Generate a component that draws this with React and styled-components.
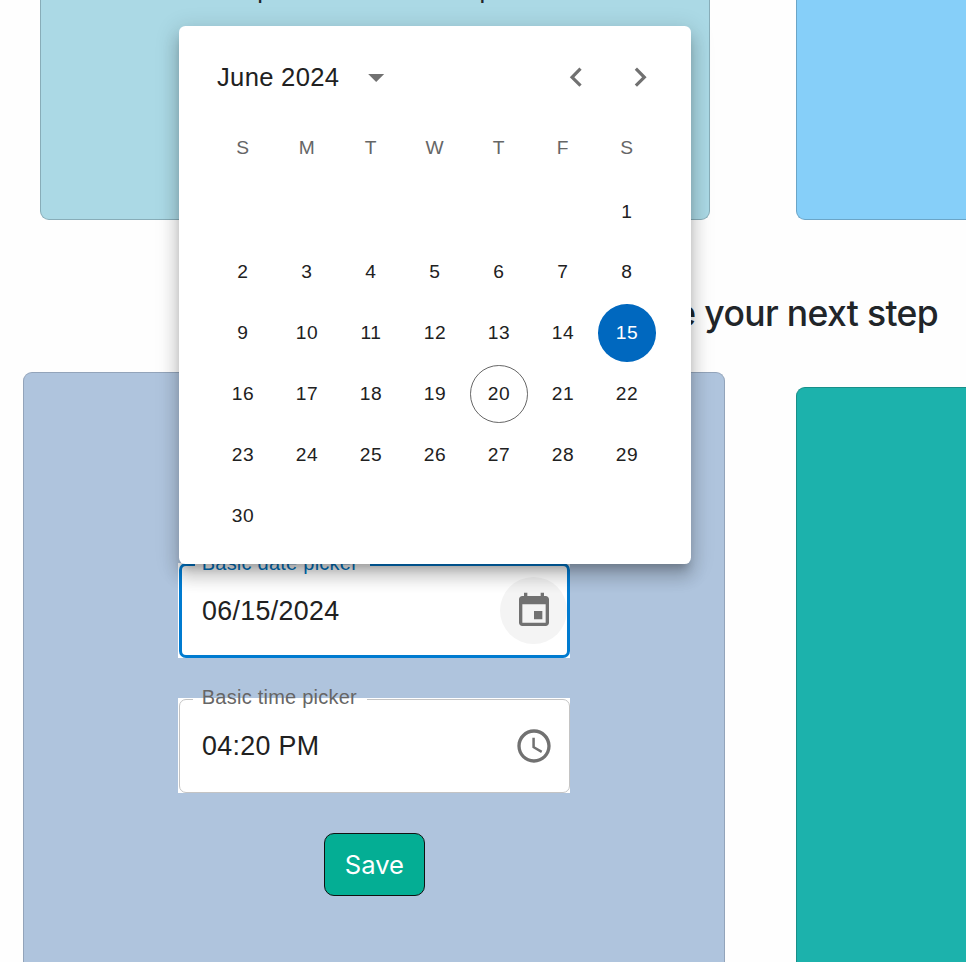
import React from "react";
import styled, { createGlobalStyle, css } from "styled-components";

const GlobalStyle = createGlobalStyle`
  *, *::before, *::after { box-sizing: border-box; }
  body {
    margin: 0;
    overflow: hidden;
    background: #fefefe;
    color: #212529;
    font-family: Inter, "Liberation Sans", sans-serif;
  }
`;

const Page = styled.main`
  position: relative;
  height: 962px;
  overflow: hidden;
`;

const CardRow = styled.section`
  display: grid;
  grid-template-columns: 796px 1fr;
  height: ${(p) => p.$height}px;
`;

const Card = styled.article`
  display: flex;
  flex-direction: column;
  background: ${(p) => p.$color};
  border: 1px solid ${(p) => p.$border};
  ${(p) =>
    p.$edge === "top"
      ? css`border-bottom: 0; border-radius: 9px 9px 0 0;`
      : css`border-top: 0; border-radius: 0 0 9px 9px;`}
  margin: ${(p) => p.$margin || "0"};
  ${(p) => p.$bleed && css`border-right: 0; border-top-right-radius: 0; border-bottom-right-radius: 0;`}
`;

const CardCaption = styled.p`
  display: flex;
  gap: 206.6px;
  margin: -26px 0 0 216px;
  font-size: 25.6px;
  line-height: 30px;
`;

const StepTitle = styled.h2`
  display: flex;
  justify-content: flex-end;
  align-items: center;
  height: 152px;
  margin: 0;
  padding: 36px 28px 0 0;
  font-size: 35.5px;
  font-weight: 500;
  line-height: 42px;
  letter-spacing: -0.65px;
  white-space: nowrap;
`;

const Form = styled.form`
  display: flex;
  flex-direction: column;
  align-items: center;
  width: 392px;
  margin: 190px 0 0 154px;
`;

const Field = styled.div`
  position: relative;
  display: flex;
  align-items: center;
  justify-content: space-between;
  width: 392px;
  height: 95px;
  margin-bottom: 40px;
  padding: 0 3.4px 0 23.5px;
  background: #fff;
`;

const Outline = styled.fieldset`
  position: absolute;
  inset: ${(p) => (p.$focused ? "-12px" : "-13px")} 0.5px 0.5px 0.5px;
  margin: 0;
  padding: 0 0 0 ${(p) => (p.$focused ? 12.8 : 13.4)}px;
  border: ${(p) => (p.$focused ? "3px solid #007bd0" : "1px solid #c4c4c4")};
  border-radius: 7px;
  color: ${(p) => (p.$focused ? "#0074c2" : "#666")};
  pointer-events: none;
`;

const Legend = styled.legend`
  padding: 0 ${(p) => (p.$focused ? 12 : 10)}px ${(p) => (p.$focused ? 2 : 3)}px ${(p) => (p.$focused ? 7 : 8.5)}px;
  font: 20px/25px "Liberation Sans", Arial, sans-serif;
  letter-spacing: 0.24px;
`;

const Value = styled.span`
  color: #212121;
  font: 26.8px/36px "Liberation Sans", Arial, sans-serif;
  letter-spacing: 0.34px;
`;

const IconButton = styled.button`
  display: grid;
  place-items: center;
  width: ${(p) => p.$size}px;
  height: ${(p) => p.$size}px;
  padding: 0;
  border: 0;
  border-radius: 50%;
  background: ${(p) => (p.$hovered ? "#f4f4f4" : "transparent")};
  color: #717171;
`;

const Glyph = styled.svg`
  display: block;
  width: ${(p) => p.$size || 38.4}px;
  height: ${(p) => p.$size || 38.4}px;
  fill: currentColor;
`;

const SaveButton = styled.button`
  width: 101px;
  height: 63px;
  padding: 0;
  border: 1px solid #111;
  border-radius: 10px;
  background: #04ae94;
  color: #fff;
  font: 400 25.6px/38px Inter, "Liberation Sans", sans-serif;
`;

const Calendar = styled.div`
  position: absolute;
  top: 26px;
  left: 179px;
  width: 512px;
  height: 538px;
  padding: 19px 32px 0;
  border-radius: 6.4px;
  background: #fff;
  color: #212121;
  font-family: "Liberation Sans", Arial, sans-serif;
  box-shadow:
    0 8px 8px -4.8px rgba(0, 0, 0, 0.2),
    0 12.8px 16px 1.6px rgba(0, 0, 0, 0.14),
    0 4.8px 22.4px 3.2px rgba(0, 0, 0, 0.12);
`;

const CalendarHeader = styled.header`
  display: flex;
  align-items: center;
  height: 64px;
  margin-bottom: 6px;
  padding-left: 6px;
`;

const MonthLabel = styled.span`
  width: 127px;
  font-size: 25.6px;
  line-height: 38px;
  letter-spacing: 0.3px;
  white-space: nowrap;
`;

const MonthNav = styled.nav`
  display: flex;
  margin-left: auto;
  margin-right: -13.6px;
`;

const Week = styled.div`
  display: grid;
  grid-template-columns: repeat(7, 64px);
  place-items: center;
  height: ${(p) => (p.$heading ? 65 : 60.8)}px;
  margin-bottom: ${(p) => (p.$heading ? 1.2 : 0)}px;
`;

const Weekday = styled.span`
  color: #666;
  font-size: 19.2px;
  letter-spacing: 0.64px;
`;

const Day = styled.button`
  width: 57.6px;
  height: 57.6px;
  padding: 0;
  border: ${(p) => (p.$today ? "1px solid #666" : "0")};
  border-radius: 50%;
  background: ${(p) => (p.$selected ? "#0068bf" : "transparent")};
  color: ${(p) => (p.$selected ? "#fff" : "#212121")};
  font: 19.2px/28px "Liberation Sans", Arial, sans-serif;
  letter-spacing: 0.64px;
`;

const ICONS = {
  down: "M7 10l5 5 5-5z",
  left: "M15.41 7.41 14 6l-6 6 6 6 1.41-1.41L10.83 12z",
  right: "M10 6 8.59 7.41 13.17 12l-4.58 4.59L10 18l6-6z",
  calendar:
    "M17 12h-5v5h5v-5zM16 1v2H8V1H6v2H5c-1.11 0-1.99.9-1.99 2L3 19c0 1.1.89 2 2 2h14c1.1 0 2-.9 2-2V5c0-1.1-.9-2-2-2h-1V1h-2zm3 18H5V8h14v11z",
  clock:
    "M11.99 2C6.47 2 2 6.48 2 12s4.47 10 9.99 10C17.52 22 22 17.52 22 12S17.52 2 11.99 2zM12 20c-4.42 0-8-3.58-8-8s3.58-8 8-8 8 3.58 8 8-3.58 8-8 8zM12.5 7H11v6l5.25 3.15.75-1.23-4.5-2.67z",
};

const WEEKDAYS = ["S", "M", "T", "W", "T", "F", "S"];
const FIRST_COLUMN = 6;
const WEEKS = Array.from({ length: 6 }, (_, w) =>
  Array.from({ length: 7 }, (_, d) => w * 7 + d - FIRST_COLUMN + 1)
);

function Icon({ name, size }) {
  return (
    <Glyph viewBox="0 0 24 24" $size={size} aria-hidden="true">
      <path d={ICONS[name]} />
    </Glyph>
  );
}

function PickerField({ label, value, icon, focused }) {
  return (
    <Field>
      <Value>{value}</Value>
      <IconButton type="button" $size={67} $hovered={focused} aria-label={label}>
        <Icon name={icon} size={40} />
      </IconButton>
      <Outline $focused={focused}>
        <Legend $focused={focused}>{label}</Legend>
      </Outline>
    </Field>
  );
}

function DateCalendar() {
  return (
    <Calendar>
      <CalendarHeader>
        <MonthLabel>June 2024</MonthLabel>
        <IconButton $size={64} aria-label="Choose year">
          <Icon name="down" />
        </IconButton>
        <MonthNav>
          <IconButton $size={64} aria-label="Previous month">
            <Icon name="left" />
          </IconButton>
          <IconButton $size={64} aria-label="Next month">
            <Icon name="right" />
          </IconButton>
        </MonthNav>
      </CalendarHeader>
      <Week $heading>
        {WEEKDAYS.map((d, i) => (
          <Weekday key={i}>{d}</Weekday>
        ))}
      </Week>
      {WEEKS.map((week, i) => (
        <Week key={i}>
          {week.map((d) =>
            d > 0 && d <= 30 ? (
              <Day key={d} $selected={d === 15} $today={d === 20}>
                {d}
              </Day>
            ) : (
              <span key={d} />
            )
          )}
        </Week>
      ))}
    </Calendar>
  );
}

export default function App() {
  return (
    <>
      <GlobalStyle />
      <Page>
        <CardRow $height={220}>
          <Card $color="#abd9e5" $border="#88adb8" $margin="0 86px 0 40px">
            <CardCaption>
              <span>p</span>
              <span>p</span>
            </CardCaption>
          </Card>
          <Card $color="#86cff9" $border="#6ba5c7" $bleed />
        </CardRow>
        <StepTitle>Take your next step</StepTitle>
        <CardRow $height={590}>
          <Card $edge="top" $color="#afc4dd" $border="#93a4ba" $margin="0 70.6px 0 23.4px">
            <Form onSubmit={(e) => e.preventDefault()}>
              <PickerField label="Basic date picker" value="06/15/2024" icon="calendar" focused />
              <PickerField label="Basic time picker" value="04:20 PM" icon="clock" />
              <SaveButton type="submit">Save</SaveButton>
            </Form>
          </Card>
          <Card $edge="top" $color="#1cb2ac" $border="#188f89" $margin="15px 0 0" $bleed />
        </CardRow>
        <DateCalendar />
      </Page>
    </>
  );
}
